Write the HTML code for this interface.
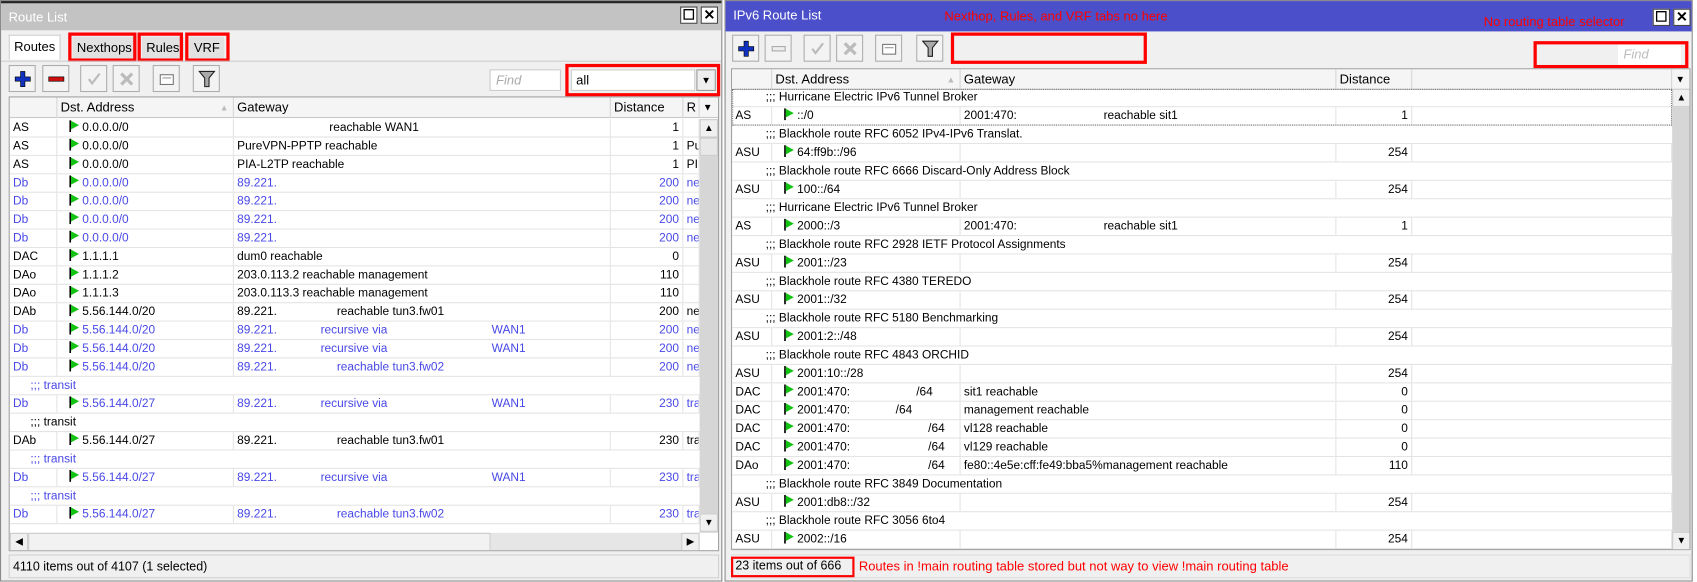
<!DOCTYPE html>
<html><head><meta charset="utf-8"><style>
*{box-sizing:border-box;margin:0;padding:0}
html,body{width:1697px;height:582px;overflow:hidden;background:#fff}
#s{position:absolute;left:0;top:0;width:1567px;height:537px;transform:scale(1.083);transform-origin:0 0;font-family:"Liberation Sans",Arial,sans-serif;font-size:11px;color:#000}
.w{position:absolute;top:0;height:537px;background:#f0f0f0;border:1px solid #8a8a8a}
.tb{position:absolute;left:0;right:0;top:0;height:27px;color:#fff;font-size:12px;line-height:27px;padding-left:7px}
.cb{position:absolute;top:5px;width:16px;height:16px;background:#fff;border:1px solid #444;font-size:13px;line-height:13px;text-align:center;font-weight:bold}
.btn{position:absolute;width:25px;height:25px;border:1px solid #adadad;background:#f3f3f3}
.btn svg{position:absolute;left:4px;top:4px}
.red{position:absolute;border:3px solid #f00}
.tab{position:absolute;top:33px;height:20px;line-height:20px;padding:0 4px;background:#e1e1e1;font-size:12px}
.t{position:absolute;background:#fff;overflow:hidden;border:1px solid #a0a0a0}
.hd{position:absolute;left:0;top:0;right:0;height:19px;background:#f5f5f5;border-bottom:1px solid #c8c8c8}
.hd i{position:absolute;top:0;height:19px;line-height:19px;font-style:normal;padding-left:3px;border-right:1px solid #d5d5d5;font-size:12px}
.r{position:absolute;left:0;right:0;height:17px;border-bottom:1px solid #e4e4e4;line-height:16px;white-space:nowrap}
.r i{position:absolute;top:0;height:16px;font-style:normal;padding-left:3px;border-right:1px solid #e4e4e4;overflow:hidden}
.r i.n{text-align:right;padding-right:3px}
.r b{position:absolute;font-weight:normal;top:0}
.c{padding-left:19px}
.bl{color:#4848e8}
.fl{display:inline-block;vertical-align:-1px;margin:0 3px 0 8px}
.L .c1{left:0;width:44px}.L .c2{left:44px;width:163px}.L .c3{left:207px;width:348px}.L .c4{left:555px;width:67px}.L .c5{left:622px;width:15px}
.R .c1{left:0;width:37px}.R .c2{left:37px;width:174px}.R .c3{left:211px;width:347px}.R .c4{left:558px;width:70px}.R .c5{left:628px;width:240px}
.sb{position:absolute;background:#d6d6d6}
.ar{position:absolute;left:0;width:17px;height:17px;background:#f0f0f0;border:1px solid #ccc;font-size:9px;text-align:center;line-height:15px}
.st{position:absolute;height:22px;line-height:22px;font-size:11.5px;padding-left:3px;border:1px solid #d0d0d0}
</style></head><body><div id="s">
<svg width="0" height="0" style="position:absolute"><defs><symbol id="f" viewBox="0 0 9 11"><rect x="0" y="0" width="1.6" height="11" fill="#000"/><path d="M1.6 0.5L9 4.5L1.6 8.5Z" fill="#13c313"/></symbol></defs></svg>

<!-- LEFT WINDOW -->
<div class="w L" style="left:0;width:667px">
<div class="tb" style="background:#c3c3c3;border-top:2px solid #222">Route List</div>
<div class="cb" style="left:627px">☐</div><div class="cb" style="left:646px">✕</div>
<div class="tab" style="left:7px;top:31px;height:23px;background:#fff;border:1px solid #ccc;border-bottom:none">Routes</div>
<div class="tab" style="left:66px">Nexthops</div><div class="tab" style="left:130px">Rules</div><div class="tab" style="left:174px">VRF</div>
<div class="red" style="left:62px;top:29px;width:63px;height:27px"></div>
<div class="red" style="left:126px;top:29px;width:42px;height:27px"></div>
<div class="red" style="left:170px;top:29px;width:41px;height:27px"></div>
<div style="position:absolute;left:0;right:0;top:55px;border-top:1px solid #ccc"></div>
<div class="btn" style="left:7px;top:59px"><svg width="16" height="16"><path d="M6 1h4v5h5v4h-5v5H6v-5H1V6h5z" fill="#1030c0" stroke="#000" stroke-width=".6"/></svg></div>
<div class="btn" style="left:38px;top:59px"><svg width="16" height="16"><rect x="1" y="6" width="14" height="4" fill="#d01010" stroke="#000" stroke-width=".6"/></svg></div>
<div class="btn" style="left:73px;top:59px"><svg width="16" height="16"><path d="M3 8l3 4 7-9" fill="none" stroke="#bbb" stroke-width="2"/></svg></div>
<div class="btn" style="left:103px;top:59px"><svg width="16" height="16"><path d="M3 3l10 10M13 3L3 13" stroke="#bbb" stroke-width="3"/></svg></div>
<div class="btn" style="left:140px;top:59px"><svg width="16" height="16"><rect x="2" y="4" width="12" height="9" fill="#fff" stroke="#777"/><path d="M4 7h8" stroke="#999"/></svg></div>
<div class="btn" style="left:177px;top:59px"><svg width="16" height="16"><path d="M1 1h14l-5 6v8H6V7z" fill="#aaa" stroke="#222"/></svg></div>
<div style="position:absolute;left:451px;top:63px;width:66px;height:20px;background:#fff;border:1px solid #ccc;color:#aaa;font-style:italic;font-size:12px;line-height:18px;padding-left:5px">Find</div>
<div style="position:absolute;left:526px;top:63px;width:115px;height:20px;background:#fff;border:1px solid #ccc;font-size:12px;line-height:18px;padding-left:4px">all</div>
<div style="position:absolute;left:642px;top:63px;width:18px;height:20px;background:#eee;border:1px solid #999;font-size:9px;text-align:center;line-height:18px">▼</div>
<div class="red" style="left:521px;top:58px;width:143px;height:30px"></div>
<div class="t" style="left:7px;top:88px;width:656px;height:420px">
<div class="hd"><i style="left:0;width:44px"></i><i style="left:44px;width:163px">Dst. Address<span style="position:absolute;right:4px;color:#bbb;font-size:8px">▲</span></i><i style="left:207px;width:348px">Gateway</i><i style="left:555px;width:67px">Distance</i><i style="left:622px;width:15px">R</i><i style="left:637px;width:18px;border:none;font-size:9px">▼</i></div>
<div style="position:absolute;left:0;top:20px;width:637px">
<div class="r" style="top:0"><i class="c1">AS</i><i class="c2"><svg class="fl" width="9" height="11"><use href="#f"/></svg>0.0.0.0/0</i><i class="c3"><b style="left:88px">reachable WAN1</b></i><i class="c4 n">1</i><i class="c5"></i></div>
<div class="r" style="top:17px"><i class="c1">AS</i><i class="c2"><svg class="fl" width="9" height="11"><use href="#f"/></svg>0.0.0.0/0</i><i class="c3">PureVPN-PPTP reachable</i><i class="c4 n">1</i><i class="c5">Pu</i></div>
<div class="r" style="top:34px"><i class="c1">AS</i><i class="c2"><svg class="fl" width="9" height="11"><use href="#f"/></svg>0.0.0.0/0</i><i class="c3">PIA-L2TP reachable</i><i class="c4 n">1</i><i class="c5">PI</i></div>
<div class="r bl" style="top:51px"><i class="c1">Db</i><i class="c2"><svg class="fl" width="9" height="11"><use href="#f"/></svg>0.0.0.0/0</i><i class="c3">89.221.</i><i class="c4 n">200</i><i class="c5">ne</i></div>
<div class="r bl" style="top:68px"><i class="c1">Db</i><i class="c2"><svg class="fl" width="9" height="11"><use href="#f"/></svg>0.0.0.0/0</i><i class="c3">89.221.</i><i class="c4 n">200</i><i class="c5">ne</i></div>
<div class="r bl" style="top:85px"><i class="c1">Db</i><i class="c2"><svg class="fl" width="9" height="11"><use href="#f"/></svg>0.0.0.0/0</i><i class="c3">89.221.</i><i class="c4 n">200</i><i class="c5">ne</i></div>
<div class="r bl" style="top:102px"><i class="c1">Db</i><i class="c2"><svg class="fl" width="9" height="11"><use href="#f"/></svg>0.0.0.0/0</i><i class="c3">89.221.</i><i class="c4 n">200</i><i class="c5">ne</i></div>
<div class="r" style="top:119px"><i class="c1">DAC</i><i class="c2"><svg class="fl" width="9" height="11"><use href="#f"/></svg>1.1.1.1</i><i class="c3">dum0 reachable</i><i class="c4 n">0</i><i class="c5"></i></div>
<div class="r" style="top:136px"><i class="c1">DAo</i><i class="c2"><svg class="fl" width="9" height="11"><use href="#f"/></svg>1.1.1.2</i><i class="c3">203.0.113.2 reachable management</i><i class="c4 n">110</i><i class="c5"></i></div>
<div class="r" style="top:153px"><i class="c1">DAo</i><i class="c2"><svg class="fl" width="9" height="11"><use href="#f"/></svg>1.1.1.3</i><i class="c3">203.0.113.3 reachable management</i><i class="c4 n">110</i><i class="c5"></i></div>
<div class="r" style="top:170px"><i class="c1">DAb</i><i class="c2"><svg class="fl" width="9" height="11"><use href="#f"/></svg>5.56.144.0/20</i><i class="c3">89.221.<b style="left:95px">reachable tun3.fw01</b></i><i class="c4 n">200</i><i class="c5">ne</i></div>
<div class="r bl" style="top:187px"><i class="c1">Db</i><i class="c2"><svg class="fl" width="9" height="11"><use href="#f"/></svg>5.56.144.0/20</i><i class="c3">89.221.<b style="left:80px">recursive via</b><b style="left:238px">WAN1</b></i><i class="c4 n">200</i><i class="c5">ne</i></div>
<div class="r bl" style="top:204px"><i class="c1">Db</i><i class="c2"><svg class="fl" width="9" height="11"><use href="#f"/></svg>5.56.144.0/20</i><i class="c3">89.221.<b style="left:80px">recursive via</b><b style="left:238px">WAN1</b></i><i class="c4 n">200</i><i class="c5">ne</i></div>
<div class="r bl" style="top:221px"><i class="c1">Db</i><i class="c2"><svg class="fl" width="9" height="11"><use href="#f"/></svg>5.56.144.0/20</i><i class="c3">89.221.<b style="left:95px">reachable tun3.fw02</b></i><i class="c4 n">200</i><i class="c5">ne</i></div>
<div class="r bl c" style="top:238px">;;; transit</div>
<div class="r bl" style="top:255px"><i class="c1">Db</i><i class="c2"><svg class="fl" width="9" height="11"><use href="#f"/></svg>5.56.144.0/27</i><i class="c3">89.221.<b style="left:80px">recursive via</b><b style="left:238px">WAN1</b></i><i class="c4 n">230</i><i class="c5">tra</i></div>
<div class="r c" style="top:272px">;;; transit</div>
<div class="r" style="top:289px"><i class="c1">DAb</i><i class="c2"><svg class="fl" width="9" height="11"><use href="#f"/></svg>5.56.144.0/27</i><i class="c3">89.221.<b style="left:95px">reachable tun3.fw01</b></i><i class="c4 n">230</i><i class="c5">tra</i></div>
<div class="r bl c" style="top:306px">;;; transit</div>
<div class="r bl" style="top:323px"><i class="c1">Db</i><i class="c2"><svg class="fl" width="9" height="11"><use href="#f"/></svg>5.56.144.0/27</i><i class="c3">89.221.<b style="left:80px">recursive via</b><b style="left:238px">WAN1</b></i><i class="c4 n">230</i><i class="c5">tra</i></div>
<div class="r bl c" style="top:340px">;;; transit</div>
<div class="r bl" style="top:357px"><i class="c1">Db</i><i class="c2"><svg class="fl" width="9" height="11"><use href="#f"/></svg>5.56.144.0/27</i><i class="c3">89.221.<b style="left:95px">reachable tun3.fw02</b></i><i class="c4 n">230</i><i class="c5">tra</i></div>
</div>
<div class="sb" style="left:637px;top:20px;width:18px;height:382px"><div class="ar" style="top:0">▲</div><div class="ar" style="top:17px;background:#e8e8e8"></div><div class="ar" style="top:364px">▼</div></div>
<div class="sb" style="left:0;top:402px;width:637px;height:17px;background:#e6e6e6"><div class="ar" style="top:0;left:0">◀</div><div style="position:absolute;left:17px;top:0;width:427px;height:17px;background:#f2f2f2;border:1px solid #ccc"></div><div class="ar" style="top:0;left:620px">▶</div></div>
</div>
<div class="st" style="left:7px;top:511px;width:656px">4110 items out of 4107 (1 selected)</div>
</div>

<!-- RIGHT WINDOW -->
<div class="w R" style="left:669px;width:894px">
<div class="tb" style="background:#4b4fc9;height:28px">IPv6 Route List</div>
<div style="position:absolute;left:202px;top:7px;color:#f00;font-size:12px">Nexthop, Rules, and VRF tabs no here</div>
<div style="position:absolute;left:700px;top:12px;color:#f00;font-size:12px">No routing table selector</div>
<div class="cb" style="left:856px;top:7px">☐</div><div class="cb" style="left:875px;top:7px">✕</div>
<div class="btn" style="left:6px;top:31px"><svg width="16" height="16"><path d="M6 1h4v5h5v4h-5v5H6v-5H1V6h5z" fill="#1030c0" stroke="#000" stroke-width=".6"/></svg></div>
<div class="btn" style="left:36px;top:31px"><svg width="16" height="16"><rect x="2" y="6" width="12" height="4" fill="#eee" stroke="#aaa"/></svg></div>
<div class="btn" style="left:72px;top:31px"><svg width="16" height="16"><path d="M3 8l3 4 7-9" fill="none" stroke="#bbb" stroke-width="2"/></svg></div>
<div class="btn" style="left:102px;top:31px"><svg width="16" height="16"><path d="M3 3l10 10M13 3L3 13" stroke="#bbb" stroke-width="3"/></svg></div>
<div class="btn" style="left:138px;top:31px"><svg width="16" height="16"><rect x="2" y="4" width="12" height="9" fill="#fff" stroke="#777"/><path d="M4 7h8" stroke="#999"/></svg></div>
<div class="btn" style="left:176px;top:31px"><svg width="16" height="16"><path d="M1 1h14l-5 6v8H6V7z" fill="#aaa" stroke="#222"/></svg></div>
<div class="red" style="left:208px;top:29px;width:181px;height:29px"></div>
<div style="position:absolute;left:824px;top:40px;width:58px;height:19px;background:#fff;color:#bbb;font-style:italic;font-size:12px;line-height:18px;padding-left:5px">Find</div>
<div class="red" style="left:746px;top:37px;width:143px;height:25px"></div>
<div class="t" style="left:5px;top:62px;width:886px;height:445px">
<div class="hd"><i style="left:0;width:37px"></i><i style="left:37px;width:174px">Dst. Address<span style="position:absolute;right:4px;color:#bbb;font-size:8px">▲</span></i><i style="left:211px;width:347px">Gateway</i><i style="left:558px;width:70px">Distance</i><i style="left:628px;width:240px"></i><i style="left:868px;width:17px;border:none;font-size:9px">▼</i></div>
<div style="position:absolute;left:0;top:18px;width:868px">
<div class="r c" style="top:0;padding-left:31px">;;; Hurricane Electric IPv6 Tunnel Broker</div>
<div class="r" style="top:17px"><i class="c1">AS</i><i class="c2"><svg class="fl" width="9" height="11"><use href="#f"/></svg>::/0</i><i class="c3">2001:470:<b style="left:132px">reachable sit1</b></i><i class="c4 n">1</i><i class="c5"></i></div>
<div style="position:absolute;left:0;top:0;width:868px;height:34px;border:1px dotted #777"></div>
<div class="r c" style="top:34px;padding-left:31px">;;; Blackhole route RFC 6052 IPv4-IPv6 Translat.</div>
<div class="r" style="top:51px"><i class="c1">ASU</i><i class="c2"><svg class="fl" width="9" height="11"><use href="#f"/></svg>64:ff9b::/96</i><i class="c3"></i><i class="c4 n">254</i><i class="c5"></i></div>
<div class="r c" style="top:68px;padding-left:31px">;;; Blackhole route RFC 6666 Discard-Only Address Block</div>
<div class="r" style="top:85px"><i class="c1">ASU</i><i class="c2"><svg class="fl" width="9" height="11"><use href="#f"/></svg>100::/64</i><i class="c3"></i><i class="c4 n">254</i><i class="c5"></i></div>
<div class="r c" style="top:102px;padding-left:31px">;;; Hurricane Electric IPv6 Tunnel Broker</div>
<div class="r" style="top:119px"><i class="c1">AS</i><i class="c2"><svg class="fl" width="9" height="11"><use href="#f"/></svg>2000::/3</i><i class="c3">2001:470:<b style="left:132px">reachable sit1</b></i><i class="c4 n">1</i><i class="c5"></i></div>
<div class="r c" style="top:136px;padding-left:31px">;;; Blackhole route RFC 2928 IETF Protocol Assignments</div>
<div class="r" style="top:153px"><i class="c1">ASU</i><i class="c2"><svg class="fl" width="9" height="11"><use href="#f"/></svg>2001::/23</i><i class="c3"></i><i class="c4 n">254</i><i class="c5"></i></div>
<div class="r c" style="top:170px;padding-left:31px">;;; Blackhole route RFC 4380 TEREDO</div>
<div class="r" style="top:187px"><i class="c1">ASU</i><i class="c2"><svg class="fl" width="9" height="11"><use href="#f"/></svg>2001::/32</i><i class="c3"></i><i class="c4 n">254</i><i class="c5"></i></div>
<div class="r c" style="top:204px;padding-left:31px">;;; Blackhole route RFC 5180 Benchmarking</div>
<div class="r" style="top:221px"><i class="c1">ASU</i><i class="c2"><svg class="fl" width="9" height="11"><use href="#f"/></svg>2001:2::/48</i><i class="c3"></i><i class="c4 n">254</i><i class="c5"></i></div>
<div class="r c" style="top:238px;padding-left:31px">;;; Blackhole route RFC 4843 ORCHID</div>
<div class="r" style="top:255px"><i class="c1">ASU</i><i class="c2"><svg class="fl" width="9" height="11"><use href="#f"/></svg>2001:10::/28</i><i class="c3"></i><i class="c4 n">254</i><i class="c5"></i></div>
<div class="r" style="top:272px"><i class="c1">DAC</i><i class="c2"><svg class="fl" width="9" height="11"><use href="#f"/></svg>2001:470:<b style="left:133px">/64</b></i><i class="c3">sit1 reachable</i><i class="c4 n">0</i><i class="c5"></i></div>
<div class="r" style="top:289px"><i class="c1">DAC</i><i class="c2"><svg class="fl" width="9" height="11"><use href="#f"/></svg>2001:470:<b style="left:114px">/64</b></i><i class="c3">management reachable</i><i class="c4 n">0</i><i class="c5"></i></div>
<div class="r" style="top:306px"><i class="c1">DAC</i><i class="c2"><svg class="fl" width="9" height="11"><use href="#f"/></svg>2001:470:<b style="left:144px">/64</b></i><i class="c3">vl128 reachable</i><i class="c4 n">0</i><i class="c5"></i></div>
<div class="r" style="top:323px"><i class="c1">DAC</i><i class="c2"><svg class="fl" width="9" height="11"><use href="#f"/></svg>2001:470:<b style="left:144px">/64</b></i><i class="c3">vl129 reachable</i><i class="c4 n">0</i><i class="c5"></i></div>
<div class="r" style="top:340px"><i class="c1">DAo</i><i class="c2"><svg class="fl" width="9" height="11"><use href="#f"/></svg>2001:470:<b style="left:144px">/64</b></i><i class="c3">fe80::4e5e:cff:fe49:bba5%management reachable</i><i class="c4 n">110</i><i class="c5"></i></div>
<div class="r c" style="top:357px;padding-left:31px">;;; Blackhole route RFC 3849 Documentation</div>
<div class="r" style="top:374px"><i class="c1">ASU</i><i class="c2"><svg class="fl" width="9" height="11"><use href="#f"/></svg>2001:db8::/32</i><i class="c3"></i><i class="c4 n">254</i><i class="c5"></i></div>
<div class="r c" style="top:391px;padding-left:31px">;;; Blackhole route RFC 3056 6to4</div>
<div class="r" style="top:408px"><i class="c1">ASU</i><i class="c2"><svg class="fl" width="9" height="11"><use href="#f"/></svg>2002::/16</i><i class="c3"></i><i class="c4 n">254</i><i class="c5"></i></div>
</div>
<div class="sb" style="left:868px;top:18px;width:17px;height:426px"><div class="ar" style="top:0">▲</div><div class="ar" style="top:409px">▼</div></div>
</div>
<div class="st" style="left:5px;top:511px;width:886px;border-color:#ddd"></div>
<div style="position:absolute;left:5px;top:513px;width:114px;height:19px;border:2px solid #f00;font-size:11.5px;line-height:15px;padding-left:2px;white-space:nowrap">23 items out of 666</div>
<div style="position:absolute;left:123px;top:514px;color:#f00;font-size:12px;line-height:16px;white-space:nowrap">Routes in !main routing table stored but not way to view !main routing table</div>
</div>
</div></body></html>
